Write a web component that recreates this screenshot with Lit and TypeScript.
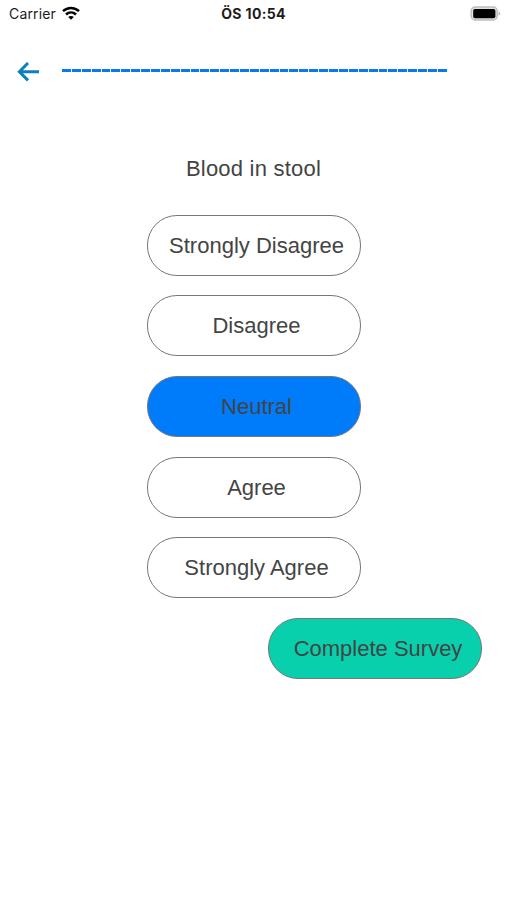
import { LitElement, html, css } from "lit";
import { customElement, property, state } from "lit/decorators.js";
import { classMap } from "lit/directives/class-map.js";

@customElement("status-bar")
class StatusBar extends LitElement {
  static styles = css`
    :host {
      display: grid;
      grid-template-columns: 1fr auto 1fr;
      align-items: center;
      height: 27px;
      padding: 0 6px 0 9px;
      font-family: Inter, "Liberation Sans", sans-serif;
      font-size: 14px;
      color: #1c1c1c;
    }
    .left { display: flex; align-items: center; gap: 6px; }
    .carrier { letter-spacing: 0.15px; }
    .time { font-weight: 700; font-size: 14px; letter-spacing: 0.35px; margin-right: 3px; }
    .right { display: flex; justify-content: flex-end; }
    svg { display: block; }
    .wifi { margin-top: -2px; }
    .battery { margin-top: -1px; }
  `;
  render() {
    return html`
      <div class="left">
        <span class="carrier">Carrier</span>
        <svg class="wifi" width="18" height="14" viewBox="0 0 18 14" fill="none" stroke="#000" stroke-width="2.5">
          <path d="M1 5.2C5.6.8 12.4.8 17 5.2" />
          <path d="M4 8.5c2.900-2.800 7.100-2.800 10 0" />
          <path d="M9 13.800 6.200 11c1.500-1.500 4.100-1.500 5.600 0z" fill="#000" stroke="none" />
        </svg>
      </div>
      <span class="time">ÖS 10:54</span>
      <div class="right">
        <svg class="battery" width="31" height="15" viewBox="0 0 31 15">
          <rect x="1.200" y="1" width="26" height="13" rx="4" fill="#e2e2e2" stroke="#bdbdbd" stroke-width="1.500" />
          <rect x="3.200" y="3" width="22.200" height="9.200" rx="1.800" fill="#000" />
          <path d="M28.600 5.200q3 2.300 0 4.600z" fill="#aaa" />
        </svg>
      </div>
    `;
  }
}

@customElement("survey-header")
class SurveyHeader extends LitElement {
  @property({ type: Number }) steps = 39;
  static styles = css`
    :host {
      display: flex;
      align-items: center;
      height: 90px;
      padding-left: 17px;
      box-sizing: border-box;
    }
    svg { display: block; margin-right: 22px; }
    .steps { display: flex; gap: 1px; width: 384.5px; margin-top: -3px; }
    .step { flex: 1; height: 3px; background: #0a78f5; }
  `;
  render() {
    return html`
      <svg width="23" height="20" viewBox="0 0 23 20" fill="none" stroke="#0c80bd" stroke-width="3">
        <path d="M22 9.700H3M11 1 2.400 9.700l8.600 8.700" />
      </svg>
      <div class="steps">
        ${Array.from({ length: this.steps }, () => html`<span class="step"></span>`)}
      </div>
    `;
  }
}

@customElement("app-root")
class AppRoot extends LitElement {
  @state() private selected = "Neutral";
  private options = ["Strongly Disagree", "Disagree", "Neutral", "Agree", "Strongly Agree"];

  static styles = css`
    :host {
      display: block;
      height: 900px;
      background: #fff;
      font-family: "Liberation Sans", Arial, sans-serif;
      font-size: 22px;
      color: #444;
    }
    .question {
      margin: 39px 0 0;
      height: 58.600px;
      line-height: 26px;
      font-size: 22px;
      font-weight: 400;
      letter-spacing: 0.22px;
      text-align: center;
    }
    .answers { display: flex; flex-direction: column; gap: 19.700px; }
    .pill {
      box-sizing: border-box;
      width: 214px;
      height: 61px;
      margin: 0 auto;
      padding: 1px 0 0 6px;
      border: 1px solid #777;
      border-radius: 30px;
      background: #fff;
      font: inherit;
      color: inherit;
      white-space: nowrap;
      text-align: center;
    }
    .pill.selected { background: #007bfa; }
    .pill.complete { margin: 0 25px 0 auto; background: #08cfac; }
  `;
  render() {
    return html`
      <status-bar></status-bar>
      <survey-header></survey-header>
      <h1 class="question">Blood in stool</h1>
      <div class="answers">
        ${this.options.map(
          (o) => html`<button
            class=${classMap({ pill: true, selected: o === this.selected })}
            @click=${() => (this.selected = o)}
          >${o}</button>`
        )}
        <button class="pill complete">Complete Survey</button>
      </div>
    `;
  }
}
